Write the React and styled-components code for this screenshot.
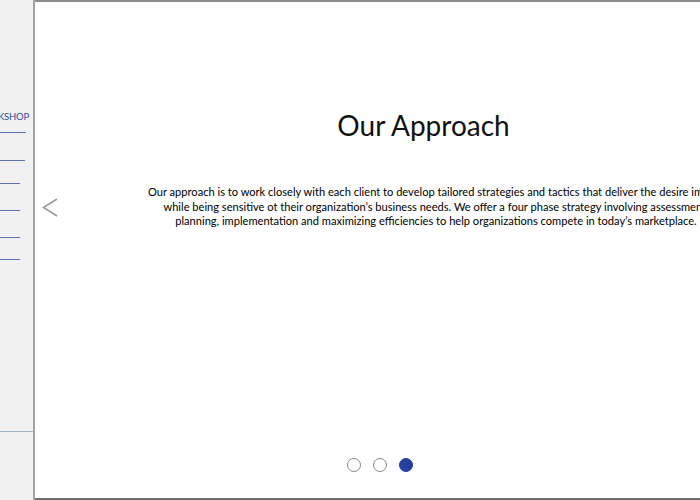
import React from 'react';
import styled, {createGlobalStyle} from 'styled-components';

const GlobalStyle = createGlobalStyle`
    html, body {
        margin: 0;
        padding: 0;
        background: #ffffff;
    }
    body {
        font-family: Lato, "Open Sans", sans-serif;
    }
`;

const navRules = [
    {gap: 9, width: 26},
    {gap: 27, width: 25},
    {gap: 22, width: 20},
    {gap: 26, width: 20},
    {gap: 26, width: 20},
    {gap: 21, width: 20},
];

function App() {
    return (
        <StyledPage>
            <GlobalStyle/>
            <Sidebar>
                <NavList>
                    <NavLabel>WORKSHOP</NavLabel>
                    {navRules.map((rule, i) => (
                        <NavRule key={i} $gap={rule.gap} $width={rule.width}/>
                    ))}
                </NavList>
                <SidebarDivider/>
            </Sidebar>

            <Main>
                <PrevButton aria-label="previous">
                    <svg width="16" height="19" viewBox="0 0 16 19">
                        <polyline points="15,1 1.5,9.5 15,18" fill="none" stroke="#9a9a9a" strokeWidth="1.6"/>
                    </svg>
                </PrevButton>
                <Stage>
                    <Title>Our Approach</Title>
                    <Body>
                        Our approach is to work closely with each client to develop tailored strategies and tactics that deliver the desire impact<br/>
                        while being sensitive ot their organization’s business needs. We offer a four phase strategy involving assessment,<br/>
                        planning, implementation and maximizing efficiencies to help organizations compete in today’s marketplace.
                    </Body>
                </Stage>
                <Dots>
                    <Dot/>
                    <Dot/>
                    <Dot $active/>
                </Dots>
            </Main>
        </StyledPage>
    )
}

export default App

const StyledPage = styled.div`
    display: flex;
    width: 700px;
    height: 500px;
    overflow: hidden;
    background: #ffffff;
`;

const Sidebar = styled.aside`
    width: 33px;
    flex-shrink: 0;
    background-color: #f1f1f1;
    border-right: 2px solid #a3a3a3;
    overflow: hidden;
    display: flex;
    flex-direction: column;
`;

const NavList = styled.nav`
    display: flex;
    flex-direction: column;
    align-items: flex-end;
    padding-top: 111px;
    height: 320px;
`;

const NavLabel = styled.span`
    font-size: 9.5px;
    line-height: 12px;
    color: #2c4c9c;
    letter-spacing: -0.2px;
    margin-right: 4px;
    white-space: nowrap;
`;

const NavRule = styled.div`
    align-self: flex-start;
    width: ${props => props.$width}px;
    height: 1px;
    margin-top: ${props => props.$gap}px;
    background-color: #5d72b3;
`;

const SidebarDivider = styled.div`
    height: 1px;
    background-color: #a9b2cc;
`;

const Main = styled.main`
    position: relative;
    flex: 1;
    display: flex;
    flex-direction: column;
    border-top: 2px solid #8c8c8c;
    border-bottom: 2px solid #6e6e6e;
    overflow: hidden;
`;

const PrevButton = styled.button`
    position: absolute;
    left: 7px;
    top: 196px;
    display: flex;
    padding: 0;
    border: none;
    background: none;
    cursor: pointer;
`;

const Stage = styled.section`
    width: 802px;
    display: flex;
    flex-direction: column;
    align-items: center;
    padding-top: 105px;
`;

const Title = styled.h1`
    margin: 0 25px 0 0;
    font-size: 28px;
    font-weight: 400;
    line-height: 36px;
    color: #111111;
`;

const Body = styled.p`
    margin: 42px 0 0;
    font-size: 11.1px;
    line-height: 14.5px;
    color: #000000;
    text-align: center;
    white-space: nowrap;
`;

const Dots = styled.div`
    display: flex;
    gap: 12px;
    margin-top: auto;
    margin-bottom: 26px;
    margin-left: 312px;
`;

const Dot = styled.span`
    width: 12px;
    height: 12px;
    border-radius: 50%;
    border: 1px solid ${props => props.$active ? '#2541a0' : '#8a8a8a'};
    background-color: ${props => props.$active ? '#2541a0' : 'transparent'};
`;
